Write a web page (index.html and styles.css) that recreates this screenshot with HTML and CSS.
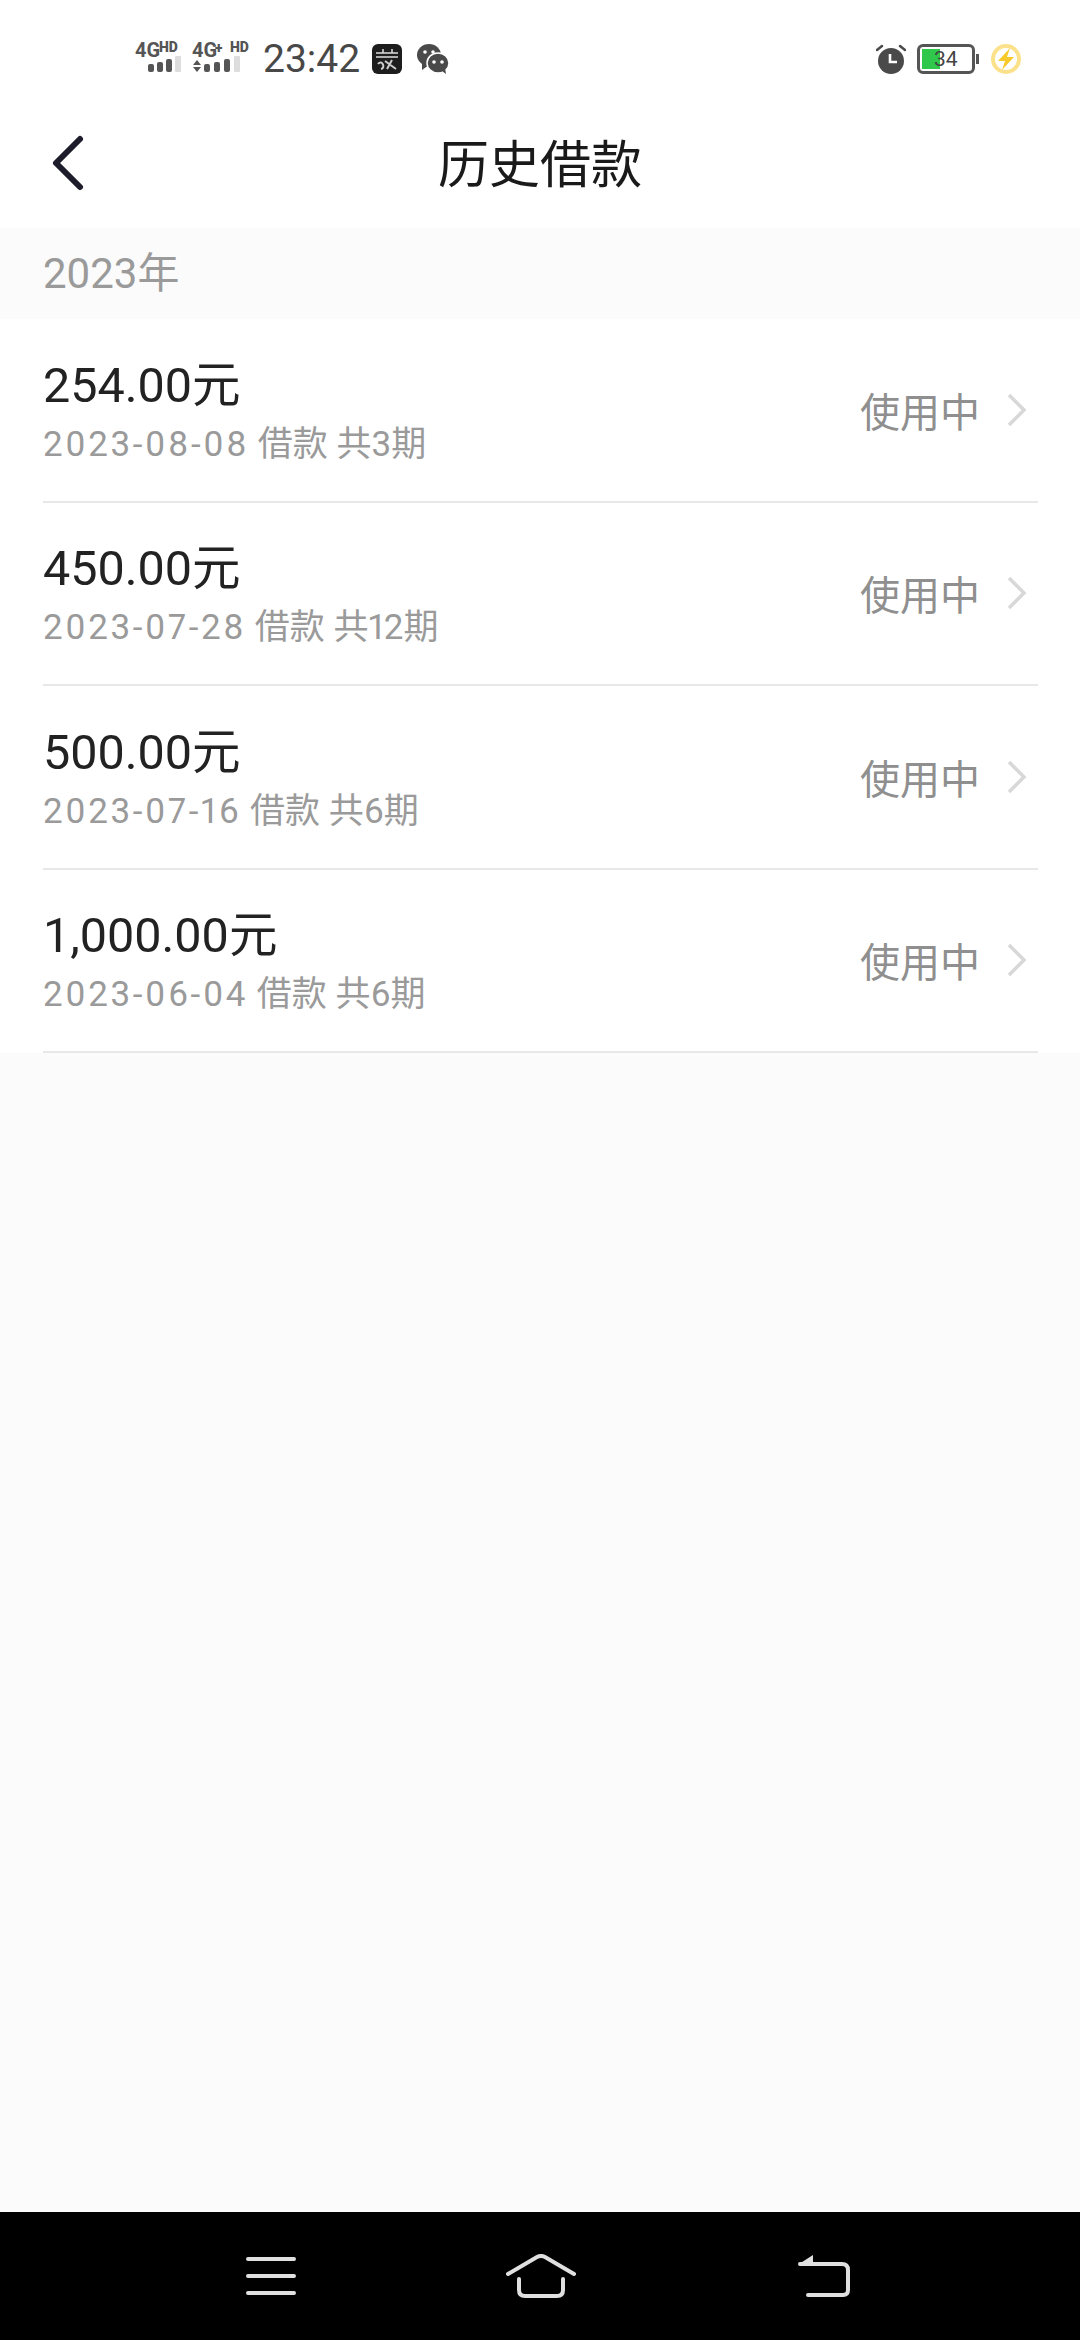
FILE: index.html
```html
<!DOCTYPE html>
<html lang="zh-CN">
<head>
    <meta charset="UTF-8">
    <meta name="viewport" content="width=device-width, initial-scale=1.0">
    <title>历史借款</title>
    <link rel="stylesheet" href="styles.css">
</head>
<body>
    <div class="status-bar">
        <div class="status-left">
            <svg class="sig-one" width="52" height="44" viewBox="0 -10 52 44">
                <text x="0" y="15" class="sig-big">4G</text>
                <text x="24" y="10" class="sig-small">HD</text>
                <rect x="13" y="22" width="6" height="8" rx="2" fill="#555"/>
                <rect x="22" y="20" width="6" height="10" rx="2" fill="#555"/>
                <rect x="31" y="17" width="6" height="13" rx="2" fill="#555"/>
                <rect x="40" y="14" width="6" height="16" rx="1" fill="#ddd"/>
            </svg>
            <svg class="sig-two" width="62" height="44" viewBox="0 -10 62 44">
                <text x="0" y="15" class="sig-big">4G</text>
                <text x="23" y="11" class="sig-small">+</text>
                <text x="38" y="10" class="sig-small">HD</text>
                <path d="M1 23 L5 18 L9 23 Z M1 25 L9 25 L5 30 Z" fill="#555"/>
                <rect x="12" y="22" width="6" height="8" rx="2" fill="#555"/>
                <rect x="22" y="20" width="6" height="10" rx="2" fill="#555"/>
                <rect x="32" y="17" width="6" height="13" rx="2" fill="#555"/>
                <rect x="42" y="14" width="6" height="16" rx="1" fill="#ddd"/>
            </svg>
            <span class="clock">23:42</span>
            <svg class="app-icon" width="30" height="30" viewBox="0 0 30 30">
                <rect width="30" height="30" rx="6" fill="#1d1d1d"/>
                <path d="M4 9 H26 M4 13 H26 M11 5 V9 M20 5 V9" stroke="#ddd" stroke-width="1.5"/>
                <path d="M6 20 C10 15 14 24 9 25 M13 17 L24 25 M20 16 L15 25" stroke="#ccc" stroke-width="2" fill="none"/>
            </svg>
            <svg class="wechat" width="34" height="32" viewBox="0 0 34 32">
                <ellipse cx="13" cy="12" rx="12" ry="11" fill="#4a4a4a"/>
                <path d="M6 19 L6 27 L13 22 Z" fill="#4a4a4a"/>
                <ellipse cx="22" cy="20" rx="11" ry="10" fill="#4a4a4a" stroke="#fff" stroke-width="1.5"/>
                <path d="M26 28 L30 31 L29 25 Z" fill="#4a4a4a"/>
                <circle cx="9" cy="9" r="1.8" fill="#fff"/>
                <circle cx="17" cy="9" r="1.8" fill="#fff"/>
                <circle cx="18" cy="19" r="1.8" fill="#fff"/>
                <circle cx="26" cy="19" r="1.8" fill="#fff"/>
            </svg>
        </div>
        <div class="status-right">
            <svg width="30" height="30" viewBox="0 0 30 30">
                <circle cx="15" cy="17" r="13" fill="#4a4a4a"/>
                <path d="M1 6 L6 2 M29 6 L24 2" stroke="#4a4a4a" stroke-width="2.5" stroke-linecap="round"/>
                <path d="M14 10 V18 H21" stroke="#fff" stroke-width="2.6" fill="none"/>
            </svg>
            <div class="battery">
                <div class="battery-body">
                    <div class="battery-fill"></div>
                    <span class="battery-num">34</span>
                </div>
                <div class="battery-cap"></div>
            </div>
            <svg width="32" height="34" viewBox="0 0 32 34">
                <circle cx="16" cy="17" r="13" fill="none" stroke="#fbe28a" stroke-width="4"/>
                <path d="M20 6 L8 19 H15 L12 28 L24 15 H17 Z" fill="#f8c92b"/>
            </svg>
        </div>
    </div>

    <div class="nav-bar">
        <svg class="back" width="36" height="58" viewBox="0 0 36 58">
            <path d="M31 5 L7 29 L31 53" stroke="#1c1c2a" stroke-width="6" stroke-linecap="round" stroke-linejoin="round" fill="none"/>
        </svg>
        <h1 class="title">历史借款</h1>
    </div>

    <main class="content">
        <div class="year">2023年</div>
        <ul class="loans">
            <li class="loan">
                <div class="loan-info">
                    <div class="amount">254.00元</div>
                    <div class="meta"><span class="date">2023-08-08</span> 借款 共3期</div>
                </div>
                <span class="state">使用中</span>
                <svg class="chevron" width="20" height="34" viewBox="0 0 20 34"><path d="M1 2 L16 17 L1 32" stroke="#d8d8d8" stroke-width="3.5" fill="none"/></svg>
            </li>
            <li class="loan">
                <div class="loan-info">
                    <div class="amount">450.00元</div>
                    <div class="meta"><span class="date">2023-07-28</span> 借款 共12期</div>
                </div>
                <span class="state">使用中</span>
                <svg class="chevron" width="20" height="34" viewBox="0 0 20 34"><path d="M1 2 L16 17 L1 32" stroke="#d8d8d8" stroke-width="3.5" fill="none"/></svg>
            </li>
            <li class="loan">
                <div class="loan-info">
                    <div class="amount">500.00元</div>
                    <div class="meta"><span class="date">2023-07-16</span> 借款 共6期</div>
                </div>
                <span class="state">使用中</span>
                <svg class="chevron" width="20" height="34" viewBox="0 0 20 34"><path d="M1 2 L16 17 L1 32" stroke="#d8d8d8" stroke-width="3.5" fill="none"/></svg>
            </li>
            <li class="loan">
                <div class="loan-info">
                    <div class="amount">1,000.00元</div>
                    <div class="meta"><span class="date">2023-06-04</span> 借款 共6期</div>
                </div>
                <span class="state">使用中</span>
                <svg class="chevron" width="20" height="34" viewBox="0 0 20 34"><path d="M1 2 L16 17 L1 32" stroke="#d8d8d8" stroke-width="3.5" fill="none"/></svg>
            </li>
        </ul>
    </main>

    <div class="soft-keys">
        <svg width="50" height="38" viewBox="0 0 50 38">
            <path d="M2 2 H48 M2 19 H48 M2 36 H48" stroke="#e0e0e0" stroke-width="4" stroke-linecap="round"/>
        </svg>
        <svg class="home-key" width="70" height="44" viewBox="0 0 70 44">
            <path d="M2 20 L31 3 Q35 1 39 3 L68 20" stroke="#e0e0e0" stroke-width="4" stroke-linecap="round" fill="none"/>
            <path d="M13 25 V36 Q13 42 19 42 H51 Q57 42 57 36 V25" stroke="#e0e0e0" stroke-width="4" stroke-linecap="round" fill="none"/>
        </svg>
        <svg width="52" height="42" viewBox="0 0 52 42">
            <path d="M1 9 L15 0 V9 Z" fill="#e0e0e0"/>
            <path d="M2 9 H44 Q50 9 50 15 V35 Q50 40 45 40 H10" stroke="#e0e0e0" stroke-width="4" stroke-linecap="round" fill="none"/>
        </svg>
    </div>
</body>
</html>
```

FILE: styles.css
```css
* {
    box-sizing: border-box;
}
body {
    display: flex;
    flex-direction: column;
    width: 1080px;
    height: 2340px;
    margin: 0;
    background-color: #fff;
    font-family: Roboto, "Noto Sans CJK SC", sans-serif;
    overflow: hidden;
}
.status-bar {
    display: flex;
    justify-content: space-between;
    align-items: center;
    height: 118px;
    padding: 0 58px 0 135px;
}
.status-left, .status-right {
    display: flex;
    align-items: center;
}
.sig-one {
    margin-right: 5px;
    margin-top: -10px;
}
.sig-two {
    margin-right: 9px;
    margin-top: -10px;
}
.sig-big {
    font-size: 20px;
    font-weight: 700;
    fill: #555;
}
.sig-small {
    font-size: 14px;
    font-weight: 900;
    fill: #555;
}
.clock {
    margin-right: 12px;
    font-size: 39px;
    color: #484848;
}
.app-icon {
    margin-right: 14px;
}
.status-right {
    gap: 11px;
}
.battery {
    display: flex;
    align-items: center;
}
.battery-body {
    position: relative;
    width: 58px;
    height: 30px;
    border: 3px solid #555;
    border-radius: 6px;
    padding: 2px;
}
.battery-fill {
    width: 18px;
    height: 100%;
    background-color: #2fc84a;
}
.battery-num {
    position: absolute;
    top: 0;
    left: 14px;
    font-size: 21px;
    line-height: 24px;
    color: #444;
}
.battery-cap {
    width: 3px;
    height: 10px;
    margin-left: 1px;
    background-color: #555;
}
.nav-bar {
    position: relative;
    display: flex;
    justify-content: center;
    align-items: center;
    height: 110px;
    padding-bottom: 24px;
}
.back {
    position: absolute;
    top: 16px;
    left: 49px;
}
.title {
    margin: 0;
    font-size: 51px;
    font-weight: 400;
    color: #1a1a1a;
}
.content {
    flex: 1;
    background-color: #fbfbfb;
}
.year {
    height: 91px;
    padding-left: 43px;
    font-size: 42px;
    line-height: 92px;
    color: #9a9a9a;
}
.loans {
    margin: 0;
    padding: 0;
    list-style: none;
    background-color: #fff;
}
.loan {
    display: flex;
    align-items: center;
    height: 183.5px;
    margin: 0 42px 0 43px;
    padding-right: 10px;
    border-bottom: 2px solid #e8e8e8;
}
.loan-info {
    flex: 1;
    padding-top: 3px;
}
.amount {
    font-size: 48.5px;
    line-height: 60px;
    color: #222;
}
.meta {
    margin-top: 7px;
    font-size: 35px;
    line-height: 44px;
    font-variant-numeric: proportional-nums;
    color: #9a9a9a;
}
.date {
    letter-spacing: 2.6px;
}
.state {
    margin-right: 28px;
    font-size: 40px;
    color: #8f8f8f;
}
.soft-keys {
    display: flex;
    align-items: center;
    height: 128px;
    padding-left: 246px;
    background-color: #000;
}
.home-key {
    margin: 0 222px 0 210px;
}
```
